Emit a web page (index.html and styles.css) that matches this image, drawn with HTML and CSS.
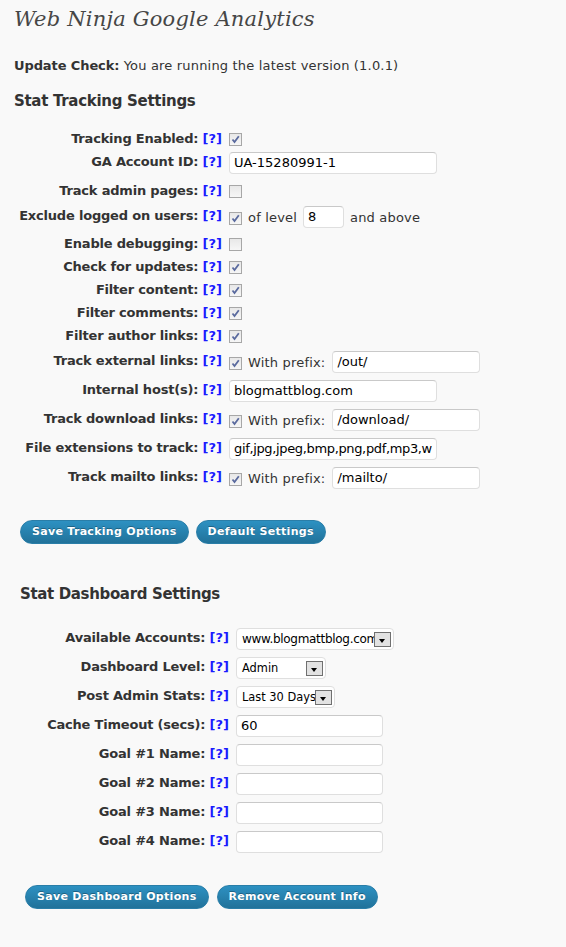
FILE: index.html
```html
<!DOCTYPE html>
<html>
<head>
<meta charset="utf-8">
<link rel="stylesheet" href="styles.css">
</head>
<body>
<div class="wrap">
  <h2 class="title">Web Ninja Google Analytics</h2>
  <p class="update"><b>Update Check:</b> You are running the latest version (1.0.1)</p>
  <h3 class="heading">Stat Tracking Settings</h3>

  <div class="form one">
    <div class="row h23"><div class="lbl">Tracking Enabled: <a class="help">[?]</a></div><div class="fld cbf"><span class="cb on"><svg viewBox="0 0 11 11"><path d="M2.5 5.5 L4.5 8 L8.8 2.2" /></svg></span></div></div>
    <div class="row h29"><div class="lbl">GA Account ID: <a class="help">[?]</a></div><div class="fld"><span class="inp w208">UA-15280991-1</span></div></div>
    <div class="row h25"><div class="lbl">Track admin pages: <a class="help">[?]</a></div><div class="fld cbf"><span class="cb"></span></div></div>
    <div class="row h28"><div class="lbl">Exclude logged on users: <a class="help">[?]</a></div><div class="fld mix"><span class="cb on"><svg viewBox="0 0 11 11"><path d="M2.5 5.5 L4.5 8 L8.8 2.2" /></svg></span><span class="txt">of level</span><span class="inp w41">8</span><span class="txt">and above</span></div></div>
    <div class="row h23"><div class="lbl">Enable debugging: <a class="help">[?]</a></div><div class="fld cbf"><span class="cb"></span></div></div>
    <div class="row h23"><div class="lbl">Check for updates: <a class="help">[?]</a></div><div class="fld cbf"><span class="cb on"><svg viewBox="0 0 11 11"><path d="M2.5 5.5 L4.5 8 L8.8 2.2" /></svg></span></div></div>
    <div class="row h23"><div class="lbl">Filter content: <a class="help">[?]</a></div><div class="fld cbf"><span class="cb on"><svg viewBox="0 0 11 11"><path d="M2.5 5.5 L4.5 8 L8.8 2.2" /></svg></span></div></div>
    <div class="row h23"><div class="lbl">Filter comments: <a class="help">[?]</a></div><div class="fld cbf"><span class="cb on"><svg viewBox="0 0 11 11"><path d="M2.5 5.5 L4.5 8 L8.8 2.2" /></svg></span></div></div>
    <div class="row h25"><div class="lbl">Filter author links: <a class="help">[?]</a></div><div class="fld cbf"><span class="cb on"><svg viewBox="0 0 11 11"><path d="M2.5 5.5 L4.5 8 L8.8 2.2" /></svg></span></div></div>
    <div class="row h29"><div class="lbl">Track external links: <a class="help">[?]</a></div><div class="fld mix"><span class="cb on"><svg viewBox="0 0 11 11"><path d="M2.5 5.5 L4.5 8 L8.8 2.2" /></svg></span><span class="txt">With prefix:</span><span class="inp w148">/out/</span></div></div>
    <div class="row h29"><div class="lbl">Internal host(s): <a class="help">[?]</a></div><div class="fld"><span class="inp w208">blogmattblog.com</span></div></div>
    <div class="row h29"><div class="lbl">Track download links: <a class="help">[?]</a></div><div class="fld mix"><span class="cb on"><svg viewBox="0 0 11 11"><path d="M2.5 5.5 L4.5 8 L8.8 2.2" /></svg></span><span class="txt">With prefix:</span><span class="inp w148">/download/</span></div></div>
    <div class="row h29"><div class="lbl">File extensions to track: <a class="help">[?]</a></div><div class="fld"><span class="inp w208 tight">gif,jpg,jpeg,bmp,png,pdf,mp3,w</span></div></div>
    <div class="row h29"><div class="lbl">Track mailto links: <a class="help">[?]</a></div><div class="fld mix"><span class="cb on"><svg viewBox="0 0 11 11"><path d="M2.5 5.5 L4.5 8 L8.8 2.2" /></svg></span><span class="txt">With prefix:</span><span class="inp w148">/mailto/</span></div></div>
  </div>

  <div class="buttons one-btn">
    <span class="btn">Save Tracking Options</span>
    <span class="btn">Default Settings</span>
  </div>

  <div class="dash">
    <h3 class="heading">Stat Dashboard Settings</h3>
    <div class="form two">
      <div class="row h29"><div class="lbl">Available Accounts: <a class="help">[?]</a></div><div class="fld"><span class="sel w158"><span class="seltxt">www.blogmattblog.com</span><span class="arrow"></span></span></div></div>
      <div class="row h29"><div class="lbl">Dashboard Level: <a class="help">[?]</a></div><div class="fld"><span class="sel w90"><span class="seltxt small">Admin</span><span class="arrow"></span></span></div></div>
      <div class="row h29"><div class="lbl">Post Admin Stats: <a class="help">[?]</a></div><div class="fld"><span class="sel w99"><span class="seltxt small">Last 30 Days</span><span class="arrow"></span></span></div></div>
      <div class="row h29"><div class="lbl">Cache Timeout (secs): <a class="help">[?]</a></div><div class="fld"><span class="inp w147">60</span></div></div>
      <div class="row h29"><div class="lbl">Goal #1 Name: <a class="help">[?]</a></div><div class="fld"><span class="inp w147"></span></div></div>
      <div class="row h29"><div class="lbl">Goal #2 Name: <a class="help">[?]</a></div><div class="fld"><span class="inp w147"></span></div></div>
      <div class="row h29"><div class="lbl">Goal #3 Name: <a class="help">[?]</a></div><div class="fld"><span class="inp w147"></span></div></div>
      <div class="row h29"><div class="lbl">Goal #4 Name: <a class="help">[?]</a></div><div class="fld"><span class="inp w147"></span></div></div>
    </div>
    <div class="buttons two-btn">
      <span class="btn">Save Dashboard Options</span>
      <span class="btn">Remove Account Info</span>
    </div>
  </div>
</div>
</body>
</html>
```

FILE: styles.css
```css
html, body {
  margin: 0;
  padding: 0;
  background: #f9f9f9;
}
body {
  font-family: "DejaVu Sans", Verdana, sans-serif;
  font-size: 13px;
  letter-spacing: 0.18px;
  color: #333;
  height: 947px;
  overflow: hidden;
}
.wrap {
  padding: 0 0 0 14px;
}
.title {
  margin: 0;
  padding-top: 5px;
  height: 29px;
  font-family: "DejaVu Serif", Georgia, serif;
  font-style: italic;
  font-weight: normal;
  font-size: 21px;
  line-height: 29px;
  color: #464646;
  letter-spacing: 0.2px;
}
.update {
  margin: 24px 0 0 0;
  line-height: 16px;
  height: 16px;
}
.update b {
  letter-spacing: -0.1px;
}
.heading {
  margin: 18px 0 0 0;
  font-size: 15px;
  line-height: 18px;
  height: 18px;
  font-weight: bold;
  color: #333;
  letter-spacing: -0.3px;
}
.form {
  display: flex;
  flex-direction: column;
}
.form.one {
  margin-top: 19px;
}
.row {
  display: grid;
  grid-template-columns: 208px 1fr;
  column-gap: 7px;
  align-items: start;
}
.form.two .row {
  grid-template-columns: 209px 1fr;
}
.h23 { height: 23px; }
.h25 { height: 25px; }
.h28 { height: 28px; }
.h29 { height: 29px; }
.lbl {
  text-align: right;
  font-weight: bold;
  padding-top: 2px;
  line-height: 16px;
  white-space: nowrap;
  letter-spacing: -0.2px;
}
.help {
  color: #1a1aff;
  font-weight: bold;
  letter-spacing: 0;
}
.fld {
  display: flex;
  align-items: center;
  height: 21px;
}
.fld.cbf {
  height: auto;
  padding-top: 4px;
}
.fld.mix {
  height: 22px;
}
.cb {
  box-sizing: border-box;
  width: 13px;
  height: 13px;
  border: 1px solid #a7a7a7;
  background: linear-gradient(#e8e8e8, #f6f6f6);
  display: inline-flex;
  flex: none;
}
.cb svg {
  width: 11px;
  height: 11px;
}
.cb svg path {
  fill: none;
  stroke: #5a6a9e;
  stroke-width: 1.8;
}
.txt {
  margin-left: 6px;
  margin-right: 6px;
  white-space: nowrap;
}
.fld.mix .cb {
  margin-top: 2px;
}
.inp {
  box-sizing: border-box;
  display: inline-block;
  height: 22px;
  border: 1px solid #dfdfdf;
  border-top-color: #c9c9c9;
  border-radius: 4px;
  background: #fff;
  padding: 0 4px;
  line-height: 20px;
  color: #000;
  white-space: nowrap;
  overflow: hidden;
  flex: none;
  letter-spacing: 0;
}
.inp.tight {
  letter-spacing: -0.35px;
}
.inp.w208 { width: 208px; }
.inp.w148 { width: 148px; margin-left: 1px; }
.inp.w41 { width: 41px; }
.inp.w147 { width: 147px; }
.sel {
  box-sizing: border-box;
  display: inline-flex;
  align-items: center;
  height: 22px;
  border: 1px solid #dfdfdf;
  border-radius: 4px;
  background: #fff;
  padding: 0 2px 0 5px;
  color: #000;
  overflow: hidden;
  letter-spacing: 0;
}
.sel.w158 { width: 158px; }
.sel.w90 { width: 90px; }
.sel.w99 { width: 99px; }
.seltxt {
  white-space: nowrap;
  flex: 1;
  min-width: 0;
  font-size: 12px;
  letter-spacing: -0.3px;
}
.seltxt.small {
  font-size: 11.4px;
  letter-spacing: 0;
}
.arrow {
  box-sizing: border-box;
  width: 17px;
  height: 15px;
  flex: none;
  border: 1px solid #707070;
  background: #e2e2e2;
  position: relative;
  margin-top: 1px;
}
.arrow::after {
  content: "";
  position: absolute;
  left: 4px;
  top: 6px;
  border-left: 3.5px solid transparent;
  border-right: 3.5px solid transparent;
  border-top: 4px solid #000;
}
.buttons {
  display: flex;
  gap: 7px;
}
.buttons.one-btn {
  margin-top: 24px;
  padding-left: 6px;
}
.btn {
  box-sizing: border-box;
  height: 24px;
  line-height: 22px;
  padding: 0 11px;
  border: 1px solid #2a7ea8;
  border-radius: 12px;
  background: linear-gradient(#2d91c2, #21729a);
  color: #fff;
  font-weight: bold;
  font-size: 11px;
  letter-spacing: 0.3px;
  text-shadow: 0 -1px 0 rgba(0,0,0,0.3);
  white-space: nowrap;
}
.dash {
  padding-left: 6px;
}
.dash .heading {
  margin-top: 41px;
  letter-spacing: -0.35px;
}
.form.two {
  margin-top: 25px;
}
.buttons.two-btn {
  margin-top: 25px;
  padding-left: 5px;
  gap: 8px;
}
```
